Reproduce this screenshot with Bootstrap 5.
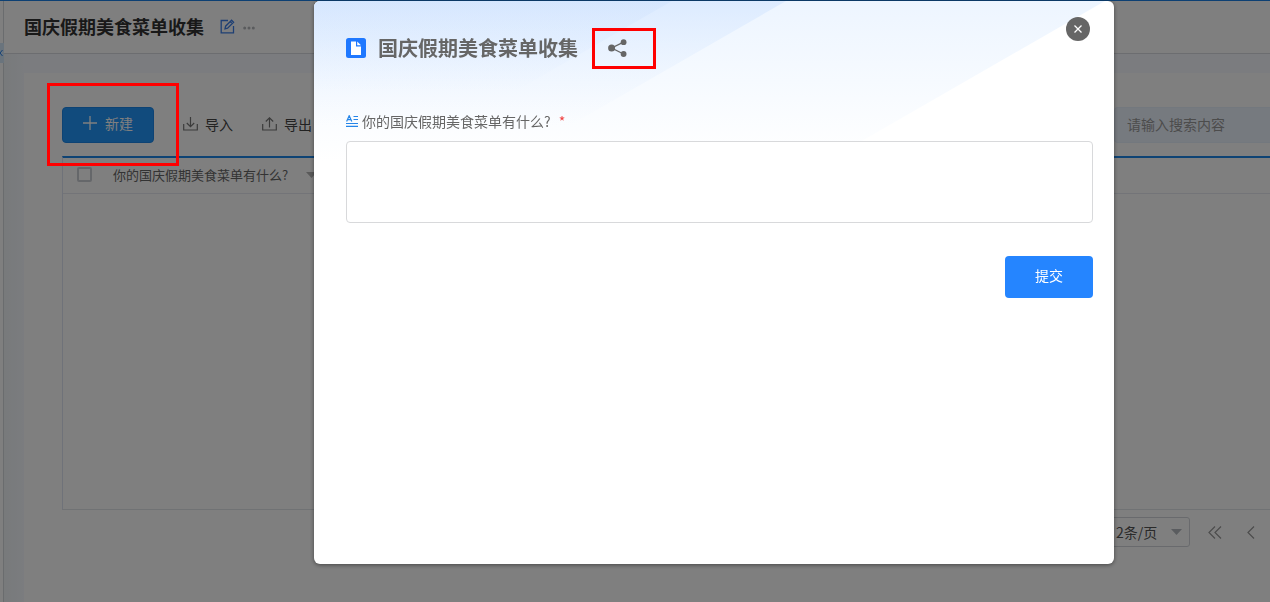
<!DOCTYPE html>
<html lang="zh-CN">
<head>
<meta charset="utf-8">
<meta name="viewport" content="width=device-width, initial-scale=1">
<title>国庆假期美食菜单收集</title>
<link href="https://cdn.jsdelivr.net/npm/bootstrap@5.3.0/dist/css/bootstrap.min.css" rel="stylesheet">
<style>
body{font-family:"Noto Sans CJK SC",sans-serif;font-size:14px;line-height:20px;color:#333;background:#f5f9ff;border-top:1px solid #1a80e6;overflow:hidden}
.side-rail{width:4px;border-right:1px solid #d4d8dc;background:#fff}
.rail-tab{left:0;top:43px;width:4px;height:20px;background:#d5e8fb;color:#2680eb}
.page-head{height:53px;padding:0 20px 2px;border-bottom:1px solid #d8dbe0;background:#fff}
.page-head h1{font-size:18px;line-height:26px}
.icon-btn{border:0;background:none;padding:0;line-height:0;color:inherit}
.edit-btn{color:#3d7fe8}
.more-btn{color:#b4b7bb;padding-top:4px}
.main-area{padding:19px 0 0 20px;background:linear-gradient(90deg,#f0f4f7,#f6f9fe 20px)}
.panel{padding:34px 0 0 38px;background:#fff}
.btn-create{width:92px;height:36px;font-size:14px;border-radius:4px;border:1px solid #1c86e8;background:#2396fa;color:#fff}
.btn-create:hover{background:#1a80e6;color:#fff}
.mark-box{border:3px solid #f00;z-index:20;pointer-events:none}
.mark-create{inset:-24px -25px -23px -15px}
.mark-share{inset:-10px -29px -11px -16px}
.tools{gap:29px}
.tool-btn{font-size:14px;line-height:18px;gap:7px;border:0;background:none;padding:0 0 2px;color:#444}
.search-box{width:156px;height:36px;border:1px solid #e6f0fc;border-right:0;border-radius:4px 0 0 4px;background:#edf4ff;font-size:14px;padding:0 12px 2px;color:#333}
.search-box::placeholder{color:#999;opacity:1}
.grid-wrap{margin-top:13px;height:354px;border-top:2px solid #1c86e8;border-left:1px solid #dfe4f2;border-bottom:1px solid #e0e4e8}
.grid-head{font-size:13px;color:#666;width:100%}
.grid-head th{font-weight:400;height:35px;border-bottom:1px solid #e6e9f0;padding:0 0 1px}
.grid-head th:first-child{width:50px;padding-left:14px}
.tick{width:15px;height:15px;margin:0;border:2px solid #cbcfd5;border-radius:2px;background:#fff;appearance:none;display:block}
.sort-caret{margin-left:18px}
.pager{padding:7px 12px 56px 0;color:#999}
.page-size{width:88px;height:30px;border:1px solid #d2d5da;border-radius:3px;appearance:none;background:#fff;padding:0 13px;font-size:14px;color:#555}
.size-caret{right:8px;top:12px}
.page-first{margin-left:18px}
.overlay{background:rgba(0,0,0,.5);z-index:10;padding-left:158px}
.dialog-box{width:800px;min-height:563px;margin-top:1px;padding:36px 21px 36px 32px;border-radius:6px;background:#fff;box-shadow:0 1px 4px rgba(0,0,0,.45);color:#666}
.dialog-bg{left:0;top:0;width:100%;height:160px;border-radius:6px 6px 0 0}
.dialog-box h2{font-size:20px;line-height:22px;margin:0 30px 0 12px}
.btn-close-round{right:24px;top:16px;width:24px;height:24px;border:0;border-radius:50%;background:#666;padding:0}
.field-label{margin-top:52px;margin-bottom:10px;gap:4px}
.required{color:#f04040}
.answer{height:82px;border:1px solid #d8d9db;border-radius:4px;resize:none}
.btn-send{width:88px;height:42px;margin-top:33px;border:0;border-radius:4px;background:#2585ff;color:#fff;font-size:14px}
.btn-send:hover{background:#1a74ea;color:#fff}
</style>
</head>
<body>
<div class="d-flex min-vh-100">
  <aside class="side-rail flex-shrink-0"></aside>
  <div class="rail-tab position-absolute d-flex align-items-center"><svg width="4" height="8" viewBox="0 0 4 8" fill="none" stroke="currentColor"><path d="M2.500 1L0 4l2.500 3"/></svg></div>
  <div class="flex-grow-1 d-flex flex-column">
    <header class="page-head d-flex align-items-center">
      <h1 class="fw-bold mb-0">国庆假期美食菜单收集</h1>
      <button class="icon-btn edit-btn ms-3" aria-label="编辑"><svg width="15" height="15" viewBox="0 0 15 15" fill="none" stroke="currentColor" stroke-width="1.300"><path d="M8 1.500H1.200v12.300h12.300V7M5 9.800l.6-2.600 6-6 2 2-6 6zM10.300 2.600l2 2"/></svg></button>
      <button class="icon-btn more-btn ms-2" aria-label="更多"><svg width="12" height="4" viewBox="0 0 12 4" fill="currentColor"><circle cx="1.700" cy="2" r="1.500"/><circle cx="6" cy="2" r="1.500"/><circle cx="10.300" cy="2" r="1.500"/></svg></button>
    </header>
    <main class="main-area flex-grow-1 d-flex flex-column">
      <section class="panel flex-grow-1">
        <div class="tools d-flex align-items-center">
          <div class="position-relative">
            <button class="btn btn-create d-flex align-items-center justify-content-center gap-2 px-0 pt-0 pb-1"><svg width="14" height="14" viewBox="0 0 14 14" stroke="currentColor" stroke-width="1.300"><path d="M0 7h14M7 0v14"/></svg>新建</button>
            <div class="mark-box mark-create position-absolute"></div>
          </div>
          <button class="tool-btn d-flex align-items-center"><svg width="15" height="14" viewBox="0 0 15 14" fill="none" stroke="#777" stroke-width="1.200"><path d="M.7 7v6h13.600V7M7.500 0v9.500M3.800 6l3.700 3.700L11.200 6"/></svg>导入</button>
          <button class="tool-btn d-flex align-items-center"><svg width="15" height="14" viewBox="0 0 15 14" fill="none" stroke="#777" stroke-width="1.200"><path d="M.7 7v6h13.600V7M7.500 10.500V1M3.800 4.500L7.500.8l3.700 3.700"/></svg>导出</button>
          <input class="search-box ms-auto" type="search" aria-label="搜索" placeholder="请输入搜索内容">
        </div>
        <div class="grid-wrap">
          <table class="grid-head">
            <thead><tr>
              <th><input class="tick" type="checkbox" aria-label="全选"></th>
              <th><span class="d-flex align-items-center">你的国庆假期美食菜单有什么?<svg class="sort-caret" width="11" height="6" viewBox="0 0 11 6"><path d="M0 0h11L5.500 6z" fill="#b4b4b4"/></svg></span></th>
            </tr></thead>
          </table>
        </div>
        <div class="pager d-flex justify-content-end align-items-center">
          <div class="position-relative">
            <select class="page-size d-block" aria-label="每页条数"><option>2条/页</option></select>
            <svg class="size-caret position-absolute" width="11" height="6" viewBox="0 0 11 6"><path d="M0 0h11L5.500 6z" fill="#b4b8be"/></svg>
          </div>
          <button class="icon-btn page-first" aria-label="首页"><svg width="14" height="13" viewBox="0 0 14 13" fill="none" stroke="currentColor" stroke-width="1.200"><path d="M7 .5l-6 6 6 6M13 .5l-6 6 6 6"/></svg></button>
          <button class="icon-btn ms-4" aria-label="上一页"><svg width="12" height="13" viewBox="0 0 12 13" fill="none" stroke="currentColor" stroke-width="1.200"><path d="M8 .5l-6 6 6 6"/></svg></button>
        </div>
      </section>
    </main>
  </div>
</div>

<div class="overlay position-fixed top-0 start-0 w-100 h-100 d-flex justify-content-center align-items-start">
  <div class="dialog-box position-relative flex-shrink-0" role="dialog" aria-labelledby="dlgTitle">
    <svg class="dialog-bg position-absolute" viewBox="0 0 800 160" preserveAspectRatio="none">
      <defs>
        <linearGradient id="g1" gradientUnits="userSpaceOnUse" x1="0" y1="0" x2="0" y2="160"><stop offset="0" stop-color="#edf5ff"/><stop offset="1" stop-color="#fff"/></linearGradient>
        <linearGradient id="g2" gradientUnits="userSpaceOnUse" x1="0" y1="0" x2="0" y2="125"><stop offset="0" stop-color="#cce1ff" stop-opacity=".5"/><stop offset="1" stop-color="#e0edff" stop-opacity="0"/></linearGradient>
        <linearGradient id="g3" gradientUnits="userSpaceOnUse" x1="0" y1="0" x2="0" y2="90"><stop offset="0" stop-color="#cce1fd" stop-opacity=".4"/><stop offset="1" stop-color="#d8e8ff" stop-opacity="0"/></linearGradient>
      </defs>
      <path d="M0 0H791L513 160H0z" fill="url(#g1)"/>
      <path d="M0 0H472L194 160H0z" fill="url(#g2)"/>
      <path d="M0 0H358L80 160H0z" fill="url(#g3)"/>
    </svg>
    <button class="btn-close-round position-absolute d-flex align-items-center justify-content-center" aria-label="关闭"><svg width="8" height="8" viewBox="0 0 8 8" stroke="#fff" stroke-width="1.300"><path d="M.5.5l7 7M7.500.5l-7 7"/></svg></button>
    <div class="position-relative">
      <div class="d-flex align-items-center">
        <svg width="20" height="20" viewBox="0 0 20 20"><rect width="20" height="20" rx="2.500" fill="#1f78ff"/><path d="M5 3.500h5v5h5V17H5zM11.200 3.500l3.800 3.800h-3.800z" fill="#fff"/></svg>
        <h2 id="dlgTitle" class="fw-bold">国庆假期美食菜单收集</h2>
        <div class="position-relative">
          <button class="icon-btn d-block" aria-label="分享"><svg width="19" height="20" viewBox="0 0 19 20" fill="#666"><path d="M15.500 4.200L3.700 10l11.800 6" fill="none" stroke="#666" stroke-width="1.300"/><circle cx="3.600" cy="10" r="3.500"/><circle cx="15.600" cy="4.200" r="2.900"/><circle cx="15.600" cy="16" r="2.900"/></svg></button>
          <div class="mark-box mark-share position-absolute"></div>
        </div>
      </div>
      <label class="field-label d-flex align-items-center" for="menuAnswer"><svg width="12" height="12" viewBox="0 0 12 12" fill="none" stroke="#2585e8" stroke-width="1.200"><path d="M0 8.500h12M0 11.400h12M7.500 1.500H12M7.500 4.500H12M.6 6.500L3.200.7l2.600 5.800M1.500 4.700h3.400"/></svg><span>你的国庆假期美食菜单有什么?</span><span class="required ms-1">*</span></label>
      <textarea id="menuAnswer" class="answer d-block w-100"></textarea>
      <button class="btn btn-send d-block ms-auto px-0 pt-0 pb-1">提交</button>
    </div>
  </div>
</div>
<script src="https://cdn.jsdelivr.net/npm/bootstrap@5.3.0/dist/js/bootstrap.bundle.min.js"></script>
</body>
</html>
